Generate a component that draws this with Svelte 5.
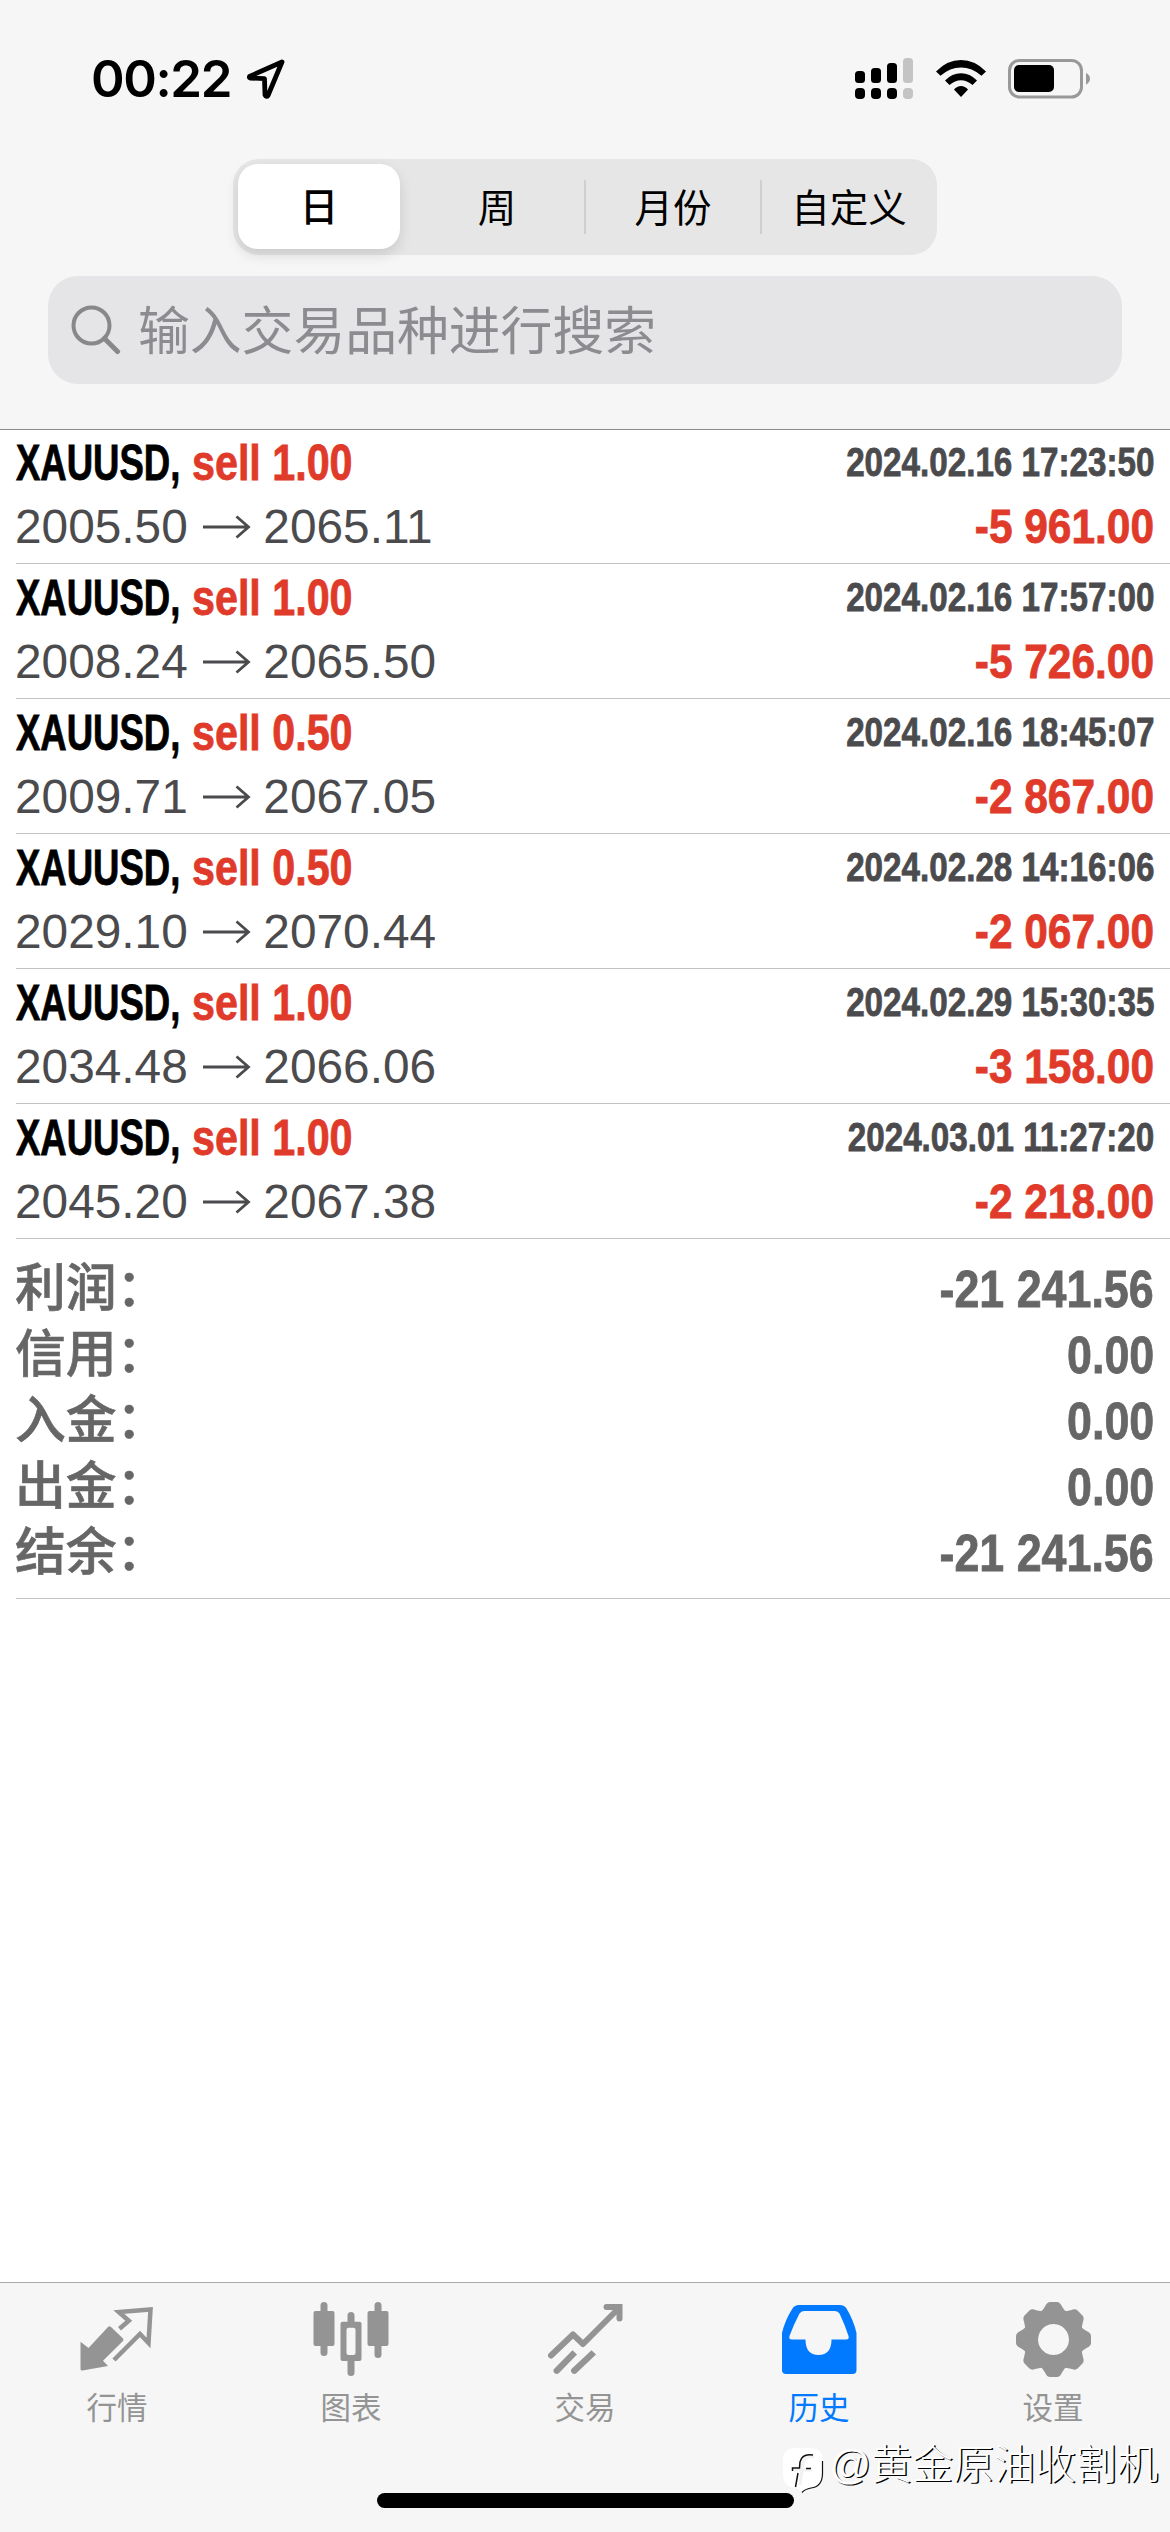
<script lang="ts">
  interface Deal {
    symbol: string;
    side: string;
    open: string;
    close: string;
    time: string;
    profit: string;
  }

  const ranges = ['日', '周', '月份', '自定义'];
  let selected = $state(0);

  const deals: Deal[] = [
    { symbol: 'XAUUSD,', side: 'sell 1.00', open: '2005.50', close: '2065.11', time: '2024.02.16 17:23:50', profit: '-5 961.00' },
    { symbol: 'XAUUSD,', side: 'sell 1.00', open: '2008.24', close: '2065.50', time: '2024.02.16 17:57:00', profit: '-5 726.00' },
    { symbol: 'XAUUSD,', side: 'sell 0.50', open: '2009.71', close: '2067.05', time: '2024.02.16 18:45:07', profit: '-2 867.00' },
    { symbol: 'XAUUSD,', side: 'sell 0.50', open: '2029.10', close: '2070.44', time: '2024.02.28 14:16:06', profit: '-2 067.00' },
    { symbol: 'XAUUSD,', side: 'sell 1.00', open: '2034.48', close: '2066.06', time: '2024.02.29 15:30:35', profit: '-3 158.00' },
    { symbol: 'XAUUSD,', side: 'sell 1.00', open: '2045.20', close: '2067.38', time: '2024.03.01 11:27:20', profit: '-2 218.00' }
  ];

  const totals = [
    { label: '利润：', value: '-21 241.56' },
    { label: '信用：', value: '0.00' },
    { label: '入金：', value: '0.00' },
    { label: '出金：', value: '0.00' },
    { label: '结余：', value: '-21 241.56' }
  ];

  const tabs = [
    { id: 'quotes', label: '行情' },
    { id: 'charts', label: '图表' },
    { id: 'trade', label: '交易' },
    { id: 'history', label: '历史' },
    { id: 'settings', label: '设置' }
  ];
  let activeTab = $state('history');

  const teeth = [0, 45, 90, 135, 180, 225, 270, 315];
</script>

<div class="screen">
  <header>
    <div class="status">
      <span class="clock">00:22</span>
      <svg class="location" viewBox="0 0 42 42" width="42" height="42">
        <path d="M36 4 3.5 18.500Q3 19.800 4 20L18.500 20.700 19 37Q20.500 39.500 22 37.500Z" fill="none" stroke="#000" stroke-width="4.800" stroke-linejoin="round" />
      </svg>
      <svg class="signal" viewBox="0 0 59 42" width="59" height="42">
        <rect x="0" y="13" width="10" height="12" rx="3.5" />
        <rect x="16" y="10" width="10" height="15" rx="3.5" />
        <rect x="32" y="5" width="10" height="20" rx="3.5" />
        <rect x="48" y="0" width="10" height="25" rx="3.5" fill="#c4c4c4" />
        <rect x="0" y="30" width="10" height="11" rx="4" />
        <rect x="16" y="30" width="10" height="11" rx="4" />
        <rect x="32" y="30" width="10" height="11" rx="4" />
        <rect x="48" y="30" width="10" height="11" rx="4" fill="#c4c4c4" />
      </svg>
      <svg class="wifi" viewBox="0 0 50 38" width="50" height="38">
        <path d="M0 11.5Q11 0 25 0T50 11.5L45.500 15.800Q36 7.500 25 7.500T4.500 15.800Z" />
        <path d="M9 20.500Q16 13.200 25 13.200T41 20.500L36.500 25Q31 20.300 25 20.300T13.500 25Z" />
        <path d="M18 29.500Q21 26 25 26T32 29.500L25 37Z" />
      </svg>
      <svg class="battery" viewBox="0 0 83 40" width="83" height="40">
        <rect x="1.500" y="1.500" width="72" height="36.500" rx="10" fill="none" stroke="#999" stroke-width="3" />
        <rect x="6" y="6" width="40" height="27" rx="5" />
        <path d="M78 14Q82 16 82 19.800T78 25.500Z" fill="#999" />
      </svg>
    </div>

    <div class="segments">
      {#each ranges as range, i}
        <button class:selected={selected === i} onclick={() => (selected = i)}>{range}</button>
      {/each}
    </div>

    <div class="search">
      <svg viewBox="0 0 50 50" width="50" height="50">
        <circle cx="20.500" cy="20.500" r="18" fill="none" stroke="#88888b" stroke-width="4" />
        <path d="M33.500 33.500 46.500 46.500" stroke="#88888b" stroke-width="5" stroke-linecap="round" />
      </svg>
      <span>输入交易品种进行搜索</span>
    </div>
  </header>

  <main>
    {#each deals as deal}
      <div class="deal">
        <div class="line title">
          <span><span class="symbol">{deal.symbol}</span><span class="side">{deal.side}</span></span>
          <span class="time">{deal.time}</span>
        </div>
        <div class="line prices">
          <span class="price">
            {deal.open}
            <svg viewBox="0 0 48 26" width="48" height="26">
              <path d="M0 13H45M33.500 2.500 45.500 13 33.500 23.500" fill="none" stroke="#4b4b4e" stroke-width="2.800" />
            </svg>
            {deal.close}
          </span>
          <span class="profit">{deal.profit}</span>
        </div>
      </div>
    {/each}

    <div class="totals">
      {#each totals as total}
        <div class="total">
          <span class="label">{total.label}</span>
          <span class="value">{total.value}</span>
        </div>
      {/each}
    </div>
  </main>

  <nav>
    {#each tabs as tab}
      <button class="tab" class:active={activeTab === tab.id} onclick={() => (activeTab = tab.id)}>
        <svg viewBox="0 0 75 75" width="75" height="75" fill="currentColor">
          {#if tab.id === 'quotes'}
            <path d="M.5 39.700 8.500 46 28 25Q29.500 23.500 31 25L43 36.500Q44 38 43 39L23 58.700 28 64 2.500 68.500Q.5 68.700.5 67Z" />
            <path d="M39.500 26.700 48.800 18.700 38.800 10 70.500 7.500 68.500 41 60 32 34 58" fill="none" stroke="currentColor" stroke-width="4.500" />
          {:else if tab.id === 'charts'}
            <rect x="-.5" y="9" width="21" height="35" rx="2" />
            <rect x="6.500" y="0" width="7" height="54" rx="3.500" />
            <path fill-rule="evenodd" d="M28.500 19.700H45.500Q47.500 19.700 47.500 21.700V57Q47.500 59 45.500 59H28.500Q26.500 59 26.500 57V21.700Q26.500 19.700 28.500 19.700ZM34.500 25.700Q32.500 25.700 32.500 28V51Q32.500 53 34.500 53H39.500Q41.500 53 41.500 51V28Q41.500 25.700 39.500 25.700Z" />
            <path d="M33.500 20V13.500a3.500 3.500 0 0 1 7 0V20ZM33.500 58V70.500a3.500 3.500 0 0 0 7 0V58Z" />
            <rect x="53.500" y="9" width="21" height="35" rx="2" />
            <rect x="60.500" y="0" width="7" height="56" rx="3.500" />
          {:else if tab.id === 'trade'}
            <g fill="none" stroke="currentColor" stroke-width="6" stroke-linecap="round">
              <path d="M3 53.500 25 32.500 35 42 71 6" stroke-linejoin="round" />
              <path d="M58.500 5H71.500V16.500" />
            </g>
            <path d="M6.500 66.500 24.500 48.200 29 52.500 11 71A3 3 0 0 1 6.500 66.500ZM24 66.500 43.500 48.200 48 52.500 28.500 71A3 3 0 0 1 24 66.500Z" />
          {:else if tab.id === 'history'}
            <path fill-rule="evenodd" d="M17 3H58Q62.500 3 64.500 6.500 71.500 18 74.500 31V68Q74.500 72 70.500 72H4Q0 72 0 68V31Q3 18 10.500 6.500 12.500 3 17 3ZM22 9Q19 9 17.500 11.500 11.500 23 7.500 34 6.500 37.500 10 37.500H23.500Q23.500 53 36.500 53T49.500 37.500H64Q67.500 37.500 66.500 34 63 23 57.500 11.500 56 9 53 9Z" />
          {:else}
            <path fill-rule="evenodd" d="M37.500 6.500A31 31 0 1 1 37.490 6.500ZM37.500 22A15.500 15.500 0 1 0 37.510 22Z" />
            {#each teeth as angle}
              <path d="M26 9 29 4.500Q31 0 34 0H41Q44 0 46 4.500L49 9Z" transform="rotate({angle} 37.5 37.5)" />
            {/each}
          {/if}
        </svg>
        <span>{tab.label}</span>
      </button>
    {/each}
    <div class="home-bar"></div>
    <div class="watermark">
      <svg viewBox="0 0 42 46" width="42" height="46">
        <path d="M14 1H28Q41 1 41 14V27Q41 40 28 41L20 45Q17 41 14 41 1 40 1 27V14Q1 1 14 1Z" fill="#fff" />
        <path d="M40.500 14V27Q40 40 29 41 23 42 20 45.500" fill="none" stroke="#111" stroke-width="1.200" />
        <path d="M32 10Q23 8 21 16L18 38M12 23H30" fill="none" stroke="#f1f1f1" stroke-width="3" />
        <path d="M31 8Q20 6 18 15L17.500 21H10.500V24M24 21.500H29M16 26 13.500 40" fill="none" stroke="#111" stroke-width="1.500" />
      </svg>
      <span>@黄金原油收割机</span>
    </div>
  </nav>
</div>

<style>
  .screen {
    width: 1170px;
    height: 2532px;
    display: flex;
    flex-direction: column;
    overflow: hidden;
    background: #fff;
    color: #4b4b4e;
    font-family: "Liberation Sans", "Noto Sans CJK SC", sans-serif;
  }

  button {
    padding: 0;
    border: 0;
    background: none;
    font: inherit;
    color: inherit;
  }

  header {
    box-sizing: border-box;
    height: 430px;
    border-bottom: 1px solid #8a8a8c;
    background: #f6f6f6;
  }

  .status {
    display: flex;
    align-items: center;
    box-sizing: border-box;
    height: 159px;
    padding: 0 79px 2px 91px;
    color: #000;
  }

  .clock {
    width: 155px;
    font: 600 51px Inter, sans-serif;
    letter-spacing: -1.4px;
  }

  .signal {
    margin-left: auto;
  }

  .wifi {
    margin-left: 22px;
  }

  .battery {
    margin-left: 22px;
  }

  .segments {
    display: grid;
    grid-template-columns: repeat(4, 176px);
    width: 704px;
    height: 96px;
    margin: 0 auto;
    border-radius: 26px;
    background: #e6e6e6;
    color: #000;
    font-family: "Noto Sans CJK SC", sans-serif;
    font-size: 38.5px;
  }

  .segments button {
    height: 54px;
    margin: 21px 0;
    padding-bottom: 4px;
    line-height: 50px;
  }

  .segments button:nth-child(n + 3) {
    box-shadow: -1px 0 #cfcfd1, inset 1px 0 #cfcfd1;
  }

  .segments .selected {
    height: 85px;
    margin: 5px 9px 6px 5px;
    line-height: 81px;
    border-radius: 20px;
    background: #fff;
    font-weight: 500;
    box-shadow: 0 6px 14px rgba(0, 0, 0, 0.12);
  }

  .search {
    display: flex;
    align-items: center;
    gap: 17px;
    box-sizing: border-box;
    width: 1074px;
    height: 108px;
    margin: 21px 48px 0;
    padding-left: 23px;
    border-radius: 30px;
    background: #e5e5e7;
    color: #8c8c90;
    font-family: "Noto Sans CJK SC", sans-serif;
    font-size: 51.8px;
    line-height: 108px;
  }

  .search span {
    margin-top: -4px;
  }

  main {
    flex: 1;
  }

  .deal {
    box-sizing: border-box;
    height: 135px;
    margin-left: 16px;
    padding: 2px 16px 0 0;
    border-bottom: 1px solid #c3c3c6;
  }

  .deal:first-child {
    height: 134px;
    padding-top: 1px;
  }

  .line {
    display: flex;
    justify-content: space-between;
    height: 64px;
    line-height: 64px;
    white-space: nowrap;
  }

  /* Narrow bold face: the regular bold squeezed horizontally */
  .symbol,
  .side,
  .time,
  .profit,
  .value {
    display: inline-block;
    font-weight: 700;
    -webkit-text-stroke: 0.8px currentColor;
  }

  .symbol {
    width: 176px;
    font-size: 50px;
    color: #000;
    transform: scaleX(0.73);
    transform-origin: left;
  }

  .side {
    font-size: 50px;
    color: #e03a2a;
    transform: scaleX(0.825);
    transform-origin: left;
  }

  .time {
    font-size: 40px;
    line-height: 62px;
    transform: scaleX(0.83);
    transform-origin: right;
  }

  .price {
    margin-left: -1px;
    font-size: 47.8px;
    line-height: 63px;
  }

  .price svg {
    margin: 0 -1px 3px 2px;
  }

  .profit {
    font-size: 49px;
    line-height: 63px;
    color: #e03a2a;
    transform: scaleX(0.866);
    transform-origin: right;
  }

  .totals {
    box-sizing: border-box;
    height: 360px;
    margin-left: 16px;
    padding: 17px 16px 0 0;
    border-bottom: 1px solid #c3c3c6;
    color: #666;
  }

  .total {
    display: flex;
    justify-content: space-between;
    height: 66px;
    line-height: 66px;
  }

  .label {
    margin-left: -1px;
    font-size: 50.8px;
    font-weight: 500;
    -webkit-text-stroke: 0.6px currentColor;
  }

  .value {
    font-size: 52px;
    transform: scaleX(0.861);
    transform-origin: right;
  }

  nav {
    position: relative;
    display: grid;
    grid-template-columns: repeat(5, 1fr);
    box-sizing: border-box;
    height: 250px;
    border-top: 1px solid #aaaaac;
    background: #f6f6f6;
    color: #949494;
  }

  .tab {
    display: flex;
    flex-direction: column;
    align-items: center;
    padding-top: 19px;
    font-family: "Noto Sans CJK SC", sans-serif;
    font-size: 30.5px;
    line-height: 50px;
  }

  .tab svg {
    overflow: visible;
    margin-bottom: 4px;
  }

  .tab.active {
    color: #027aff;
  }

  .home-bar {
    position: absolute;
    left: 377px;
    bottom: 24px;
    width: 417px;
    height: 15px;
    border-radius: 8px;
    background: #000;
  }

  .watermark {
    position: absolute;
    right: 12px;
    bottom: 39px;
    display: flex;
    align-items: center;
    gap: 5px;
    color: #fff;
    font-size: 41px;
    font-weight: 300;
    line-height: 50px;
    text-shadow: 1.4px 1.4px 0 #000;
    white-space: nowrap;
  }

  .watermark span {
    margin-top: -10px;
  }
</style>
